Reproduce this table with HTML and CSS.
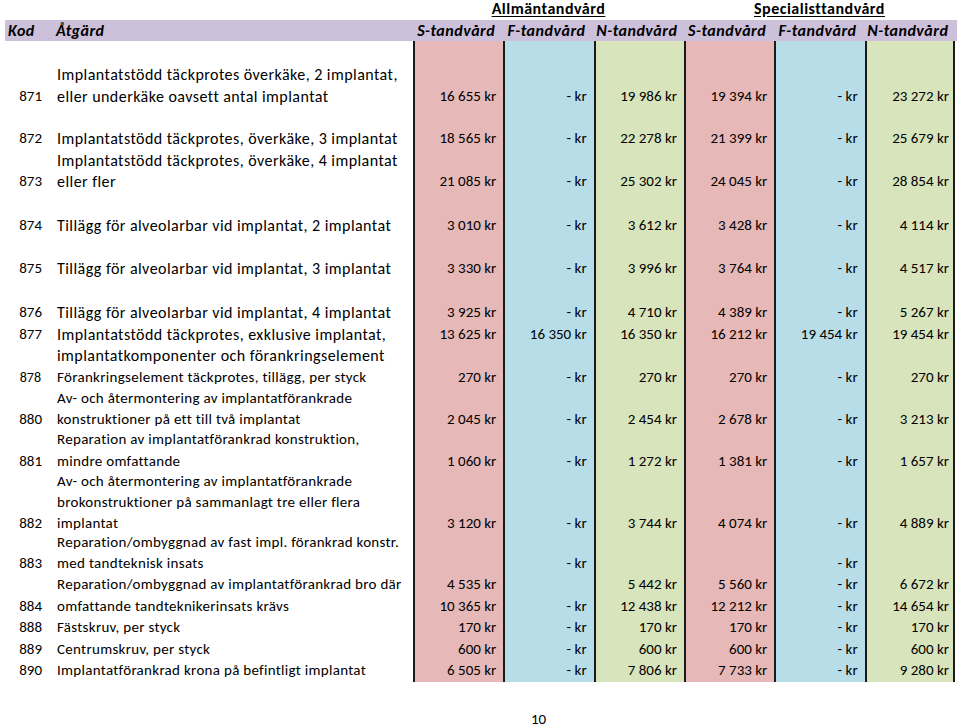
FILE: index.html
```html
<!DOCTYPE html>
<html lang="sv">
<head>
<meta charset="utf-8">
<title>Implantat – priser</title>
<link rel="stylesheet" href="styles.css">
</head>
<body>
<div class="page">
  <div class="cols titles">
    <div class="title title-a">Allmäntandvård</div>
    <div class="title title-s">Specialisttandvård</div>
  </div>
  <div class="cols head">
    <div class="h-code">Kod</div>
    <div class="h-desc">Åtgärd</div>
    <div class="h-num">S-tandvård</div>
    <div class="h-num">F-tandvård</div>
    <div class="h-num">N-tandvård</div>
    <div class="h-num">S-tandvård</div>
    <div class="h-num">F-tandvård</div>
    <div class="h-num">N-tandvård</div>
  </div>
  <div class="cols table">
    <!-- 871 -->
    <div class="cell code">871</div>
    <div class="cell desc">Implantatstödd täckprotes överkäke, 2 implantat,<br>eller underkäke oavsett antal implantat</div>
    <div class="cell num p">16 655 kr</div><div class="cell num f">- kr</div><div class="cell num n">19 986 kr</div>
    <div class="cell num p">19 394 kr</div><div class="cell num f">- kr</div><div class="cell num n last">23 272 kr</div>
    <!-- 872 -->
    <div class="cell code">872</div>
    <div class="cell desc">Implantatstödd täckprotes, överkäke, 3 implantat</div>
    <div class="cell num p">18 565 kr</div><div class="cell num f">- kr</div><div class="cell num n">22 278 kr</div>
    <div class="cell num p">21 399 kr</div><div class="cell num f">- kr</div><div class="cell num n last">25 679 kr</div>
    <!-- 873 -->
    <div class="cell code">873</div>
    <div class="cell desc">Implantatstödd täckprotes, överkäke, 4 implantat<br>eller fler</div>
    <div class="cell num p">21 085 kr</div><div class="cell num f">- kr</div><div class="cell num n">25 302 kr</div>
    <div class="cell num p">24 045 kr</div><div class="cell num f">- kr</div><div class="cell num n last">28 854 kr</div>
    <!-- 874 -->
    <div class="cell code">874</div>
    <div class="cell desc">Tillägg för alveolarbar vid implantat, 2 implantat</div>
    <div class="cell num p">3 010 kr</div><div class="cell num f">- kr</div><div class="cell num n">3 612 kr</div>
    <div class="cell num p">3 428 kr</div><div class="cell num f">- kr</div><div class="cell num n last">4 114 kr</div>
    <!-- 875 -->
    <div class="cell code">875</div>
    <div class="cell desc">Tillägg för alveolarbar vid implantat, 3 implantat</div>
    <div class="cell num p">3 330 kr</div><div class="cell num f">- kr</div><div class="cell num n">3 996 kr</div>
    <div class="cell num p">3 764 kr</div><div class="cell num f">- kr</div><div class="cell num n last">4 517 kr</div>
    <!-- 876 -->
    <div class="cell code">876</div>
    <div class="cell desc">Tillägg för alveolarbar vid implantat, 4 implantat</div>
    <div class="cell num p">3 925 kr</div><div class="cell num f">- kr</div><div class="cell num n">4 710 kr</div>
    <div class="cell num p">4 389 kr</div><div class="cell num f">- kr</div><div class="cell num n last">5 267 kr</div>
    <!-- 877 -->
    <div class="cell code up1">877</div>
    <div class="cell desc">Implantatstödd täckprotes, exklusive implantat,<br>implantatkomponenter och förankringselement</div>
    <div class="cell num p up1">13 625 kr</div><div class="cell num f up1">16 350 kr</div><div class="cell num n up1">16 350 kr</div>
    <div class="cell num p up1">16 212 kr</div><div class="cell num f up1">19 454 kr</div><div class="cell num n last up1">19 454 kr</div>
    <!-- 878 -->
    <div class="cell code small">878</div>
    <div class="cell desc sm">Förankringselement täckprotes, tillägg, per styck</div>
    <div class="cell num p">270 kr</div><div class="cell num f">- kr</div><div class="cell num n">270 kr</div>
    <div class="cell num p">270 kr</div><div class="cell num f">- kr</div><div class="cell num n last">270 kr</div>
    <!-- 880 -->
    <div class="cell code">880</div>
    <div class="cell desc sm">Av- och återmontering av implantatförankrade<br>konstruktioner på ett till två implantat</div>
    <div class="cell num p">2 045 kr</div><div class="cell num f">- kr</div><div class="cell num n">2 454 kr</div>
    <div class="cell num p">2 678 kr</div><div class="cell num f">- kr</div><div class="cell num n last">3 213 kr</div>
    <!-- 881 -->
    <div class="cell code">881</div>
    <div class="cell desc sm">Reparation av implantatförankrad konstruktion,<br>mindre omfattande</div>
    <div class="cell num p">1 060 kr</div><div class="cell num f">- kr</div><div class="cell num n">1 272 kr</div>
    <div class="cell num p">1 381 kr</div><div class="cell num f">- kr</div><div class="cell num n last">1 657 kr</div>
    <!-- 882 -->
    <div class="cell code">882</div>
    <div class="cell desc sm">Av- och återmontering av implantatförankrade<br>brokonstruktioner på sammanlagt tre eller flera<br>implantat</div>
    <div class="cell num p">3 120 kr</div><div class="cell num f">- kr</div><div class="cell num n">3 744 kr</div>
    <div class="cell num p">4 074 kr</div><div class="cell num f">- kr</div><div class="cell num n last">4 889 kr</div>
    <!-- 883 -->
    <div class="cell code">883</div>
    <div class="cell desc sm">Reparation/ombyggnad av fast impl. förankrad konstr.<br>med tandteknisk insats</div>
    <div class="cell num p"></div><div class="cell num f">- kr</div><div class="cell num n"></div>
    <div class="cell num p"></div><div class="cell num f">- kr</div><div class="cell num n last"></div>
    <!-- 884 -->
    <div class="cell code">884</div>
    <div class="cell desc sm">Reparation/ombyggnad av implantatförankrad bro där<br>omfattande tandteknikerinsats krävs</div>
    <div class="cell num p">4 535 kr<br>10 365 kr</div><div class="cell num f">- kr</div><div class="cell num n">5 442 kr<br>12 438 kr</div>
    <div class="cell num p">5 560 kr<br>12 212 kr</div><div class="cell num f">- kr<br>- kr</div><div class="cell num n last">6 672 kr<br>14 654 kr</div>
    <!-- 888 -->
    <div class="cell code">888</div>
    <div class="cell desc sm">Fästskruv, per styck</div>
    <div class="cell num p">170 kr</div><div class="cell num f">- kr</div><div class="cell num n">170 kr</div>
    <div class="cell num p">170 kr</div><div class="cell num f">- kr</div><div class="cell num n last">170 kr</div>
    <!-- 889 -->
    <div class="cell code">889</div>
    <div class="cell desc sm">Centrumskruv, per styck</div>
    <div class="cell num p">600 kr</div><div class="cell num f">- kr</div><div class="cell num n">600 kr</div>
    <div class="cell num p">600 kr</div><div class="cell num f">- kr</div><div class="cell num n last">600 kr</div>
    <!-- 890 -->
    <div class="cell code">890</div>
    <div class="cell desc sm">Implantatförankrad krona på befintligt implantat</div>
    <div class="cell num p">6 505 kr</div><div class="cell num f">- kr</div><div class="cell num n">7 806 kr</div>
    <div class="cell num p">7 733 kr</div><div class="cell num f">- kr</div><div class="cell num n last">9 280 kr</div>
  </div>
  <div class="pagenum">10</div>
</div>
</body>
</html>
```

FILE: styles.css
```css
* {
  box-sizing: border-box;
}

body {
  margin: 0;
  background: #ffffff;
  color: #000000;
  font-family: Carlito, Calibri, Lato, "Liberation Sans", sans-serif;
  font-size: 15px;
}

.page {
  width: 960px;
  height: 728px;
  padding-left: 5px;
  overflow: hidden;
}

.cols {
  display: grid;
  grid-template-columns: 50px 358px repeat(6, 90.33px);
}

.titles {
  height: 20px;
  line-height: 17px;
  font-size: 16px;
  letter-spacing: 0.5px;
  font-weight: bold;
}

.title {
  text-align: center;
  text-decoration: underline;
  text-underline-offset: 2px;
}

.title-a {
  grid-column: 3 / span 3;
}

.title-s {
  grid-column: 6 / span 3;
}

.head {
  width: 952px;
  height: 21px;
  line-height: 21px;
  background: #ccc0da;
  font-size: 16px;
  letter-spacing: 0.5px;
  font-weight: bold;
  font-style: italic;
}

.h-code {
  padding-left: 3px;
}

.h-desc {
  padding-left: 1px;
}

.h-num {
  text-align: center;
  padding-right: 4px;
  white-space: nowrap;
}

.table {
  line-height: 21.4px;
  grid-template-rows: 66.2px 42.3px 43px 43.5px 43.5px 43.5px 43.5px 21.7px 42.3px 41.7px 62.6px 40px 42.5px 21.6px 21.7px 21px;
}

.cell {
  display: flex;
  flex-direction: column;
  justify-content: flex-end;
  white-space: nowrap;
}

.code {
  text-align: right;
  padding-right: 13px;
}

.code.small {
  font-size: 14px;
  padding-right: 14px;
}

.desc {
  padding-left: 2px;
  font-size: 16px;
  letter-spacing: 0.45px;
}

.desc.sm {
  font-size: 15px;
  letter-spacing: 0.3px;
}

.num {
  text-align: right;
  padding-right: 7px;
  border-left: 2px solid #1a1a1a;
}

.num.last {
  border-right: 2px solid #1a1a1a;
  padding-right: 4px;
}

.up1 {
  padding-bottom: 21.4px;
}

.p {
  background: #e6b8b7;
}

.f {
  background: #b7dee8;
}

.n {
  background: #d8e4bc;
}

.pagenum {
  margin-top: 30px;
  padding-left: 526px;
  line-height: 15px;
}
```
